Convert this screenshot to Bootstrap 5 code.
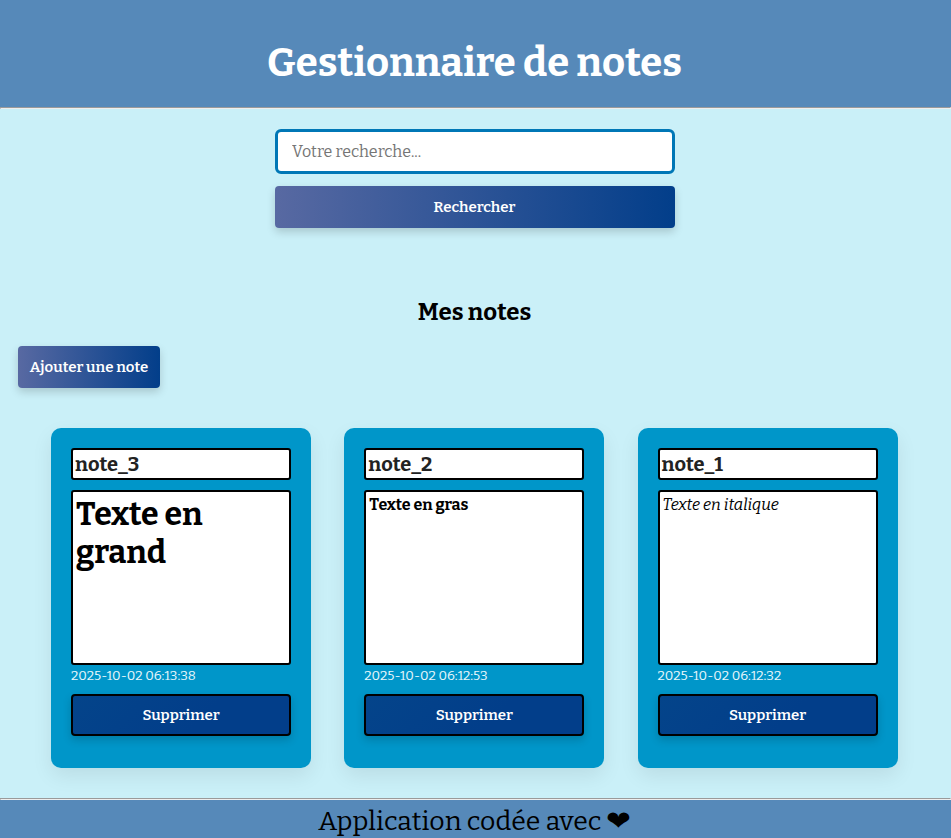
<!DOCTYPE html>
<html lang="fr">
<head>
<meta charset="utf-8">
<meta name="viewport" content="width=device-width, initial-scale=1">
<title>Gestionnaire de notes</title>
<link rel="stylesheet" href="https://cdn.jsdelivr.net/npm/bootstrap@5.3.0/dist/css/bootstrap.min.css">
<style>
body { background: #caf0f8; color: #000; font-family: Bitter, "DejaVu Serif Condensed", "DejaVu Serif", serif; height: 838px; }
.band { background: #5689b9; padding-right: 2px; }
.top-band { height: 107px; padding-top: 39px; }
.app-title { font-size: 40px; line-height: 48px; }
.rule { height: 2px; border: 1px solid; border-color: #9a9a9a #eee #eee #9a9a9a; opacity: 1; }
main { padding-right: 1px; }
.search-form { width: 400px; margin-top: 20px; gap: 12px; }
.search-form .form-control { height: 45px; border: 3px solid #0077b6; border-radius: 6px; padding: 0 14px; font-size: 16px; }
.search-form .form-control::placeholder { color: #757575; }
.action { height: 42px; border: 0; border-radius: 4px; padding: 0; color: #fff; font-size: 15px; font-weight: 600; background: linear-gradient(90deg, #5869a2, #023e8a); box-shadow: 0 4px 8px rgba(0,0,0,.17); }
.search-form .action { padding-right: 1px; }
.section-title { font-size: 24px; line-height: 30px; margin-top: 69px; padding-right: 1px; }
.add { width: 142px; margin: 19px 0 0 18px; }
.notes { margin: 40px 52.5px 0 51px; }
.note { width: 260px; height: 340px; padding: 20px; border-radius: 10px; background: #0096c9; box-shadow: 0 8px 20px rgba(0,0,0,.08); }
.note-title, .note-text { border: 2px solid #000; border-radius: 3px; background: #fff; }
.note-title { height: 32px; padding: 0 2px; font-size: 20px; line-height: 28px; font-weight: 700; color: #222; }
.note-text { height: 175px; margin-top: 10px; padding: 3px; font-size: 16px; line-height: 19px; }
.note-big { font-size: 32px; line-height: 38px; font-weight: 700; }
.note-date { height: 29px; font-size: 13.33px; line-height: 23px; color: #e9f8fc; }
.remove { border: 2px solid #000; background: linear-gradient(135deg, #04448a, #023e8a 60%); }
.bottom-band { height: 38px; font-size: 26.67px; line-height: 42px; }
.heart { display: inline-block; line-height: 1; transform: scaleX(1.1); margin: 0 1px 0 0; }
</style>
</head>
<body class="d-flex flex-column overflow-hidden">
<header class="band top-band text-center text-white"><h1 class="app-title fw-bold m-0">Gestionnaire de notes</h1></header>
<hr class="rule m-0">
<main class="flex-grow-1">
  <form class="search-form d-flex flex-column mx-auto">
    <input class="form-control" type="search" placeholder="Votre recherche..." aria-label="Votre recherche">
    <button class="btn action w-100" type="button">Rechercher</button>
  </form>
  <h2 class="section-title fw-bold text-center mb-0">Mes notes</h2>
  <button class="btn action add text-nowrap d-block" type="button">Ajouter une note</button>
  <div class="notes d-flex justify-content-between">
    <article class="note">
      <div class="note-title">note_3</div>
      <div class="note-text"><div class="note-big">Texte en<br>grand</div></div>
      <div class="note-date">2025-10-02 06:13:38</div>
      <button class="btn action remove w-100" type="button">Supprimer</button>
    </article>
    <article class="note">
      <div class="note-title">note_2</div>
      <div class="note-text"><span class="fw-bold">Texte en gras</span></div>
      <div class="note-date">2025-10-02 06:12:53</div>
      <button class="btn action remove w-100" type="button">Supprimer</button>
    </article>
    <article class="note">
      <div class="note-title">note_1</div>
      <div class="note-text"><em>Texte en italique</em></div>
      <div class="note-date">2025-10-02 06:12:32</div>
      <button class="btn action remove w-100" type="button">Supprimer</button>
    </article>
  </div>
</main>
<hr class="rule m-0 flex-shrink-0">
<footer class="band bottom-band flex-shrink-0 text-center">Application codée avec <span class="heart">❤</span></footer>
<script src="https://cdn.jsdelivr.net/npm/bootstrap@5.3.0/dist/js/bootstrap.bundle.min.js"></script>
</body>
</html>
